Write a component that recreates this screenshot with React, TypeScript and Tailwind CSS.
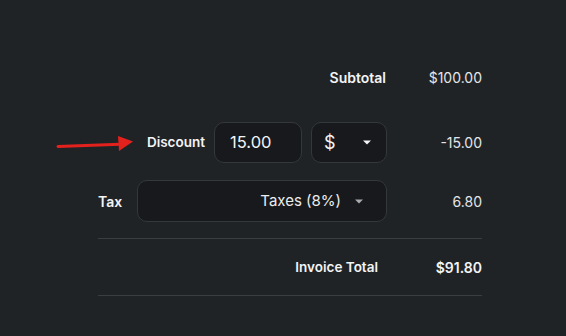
import React from 'react';

const Caret: React.FC<{ className?: string }> = ({ className }) => (
  <svg width="8" height="5" viewBox="0 0 8 5" className={className}>
    <path d="M0 0.5 L8 0.5 L4 4.5 Z" fill="currentColor" />
  </svg>
);

const App: React.FC = () => {
  return (
    <div
      className="relative w-full h-[336px] bg-[#202326] overflow-hidden text-[#f3f4f5]"
      style={{ fontFamily: 'Inter, "Noto Sans", sans-serif' }}
    >
      {/* annotation arrow */}
      <svg className="absolute left-[56px] top-[134px]" width="80" height="20" viewBox="0 0 80 20">
        <path d="M2 12.5 L64 10.2" stroke="#e3211d" strokeWidth="3" strokeLinecap="round" />
        <path d="M62 2 L77 7.6 L63 17 Z" fill="#e3211d" />
      </svg>

      <div className="ml-[98px] w-[384px] pt-[57px]">
        {/* Subtotal */}
        <div className="flex h-[40px] items-center justify-end">
          <span className="text-[14px] font-semibold">Subtotal</span>
          <span className="w-[96px] text-right text-[14px] text-[#e4e5e6]">$100.00</span>
        </div>

        {/* Discount */}
        <div className="mt-[25px] flex h-[41px] items-center justify-end">
          <span className="mr-[9px] text-[13.5px] font-semibold">Discount</span>
          <div className="flex h-[41px] w-[88px] items-center rounded-[10px] border border-[#34373b] bg-[#17191c] pl-[15px] text-[16.5px]">
            15.00
          </div>
          <div className="ml-[9px] flex h-[41px] w-[76px] items-center justify-between rounded-[10px] border border-[#34373b] bg-[#17191c] pl-[12px] pr-[15px] text-[18px]">
            <span>$</span>
            <Caret className="text-[#f3f4f5]" />
          </div>
          <span className="w-[95px] text-right text-[14px] text-[#e4e5e6]">-15.00</span>
        </div>

        {/* Tax */}
        <div className="mt-[17px] flex h-[42px] items-center">
          <span className="w-[39px] text-[14px] font-semibold">Tax</span>
          <div className="flex h-[42px] w-[250px] items-center justify-end gap-[14px] rounded-[10px] border border-[#34373b] bg-[#17191c] pr-[23px] text-[15px] text-[#eceded]">
            <span>Taxes (8%)</span>
            <Caret className="text-[#a9abae]" />
          </div>
          <span className="w-[95px] text-right text-[14px] text-[#e4e5e6]">6.80</span>
        </div>

        <div className="mt-[16px] h-px bg-[#3a3d41]" />

        {/* Invoice total */}
        <div className="flex h-[56px] items-center justify-end">
          <span className="mr-[8px] text-[13.5px] font-semibold">Invoice Total</span>
          <span className="w-[96px] text-right text-[14px] font-semibold">$91.80</span>
        </div>

        <div className="h-px bg-[#3a3d41]" />
      </div>
    </div>
  );
};

export default App;
